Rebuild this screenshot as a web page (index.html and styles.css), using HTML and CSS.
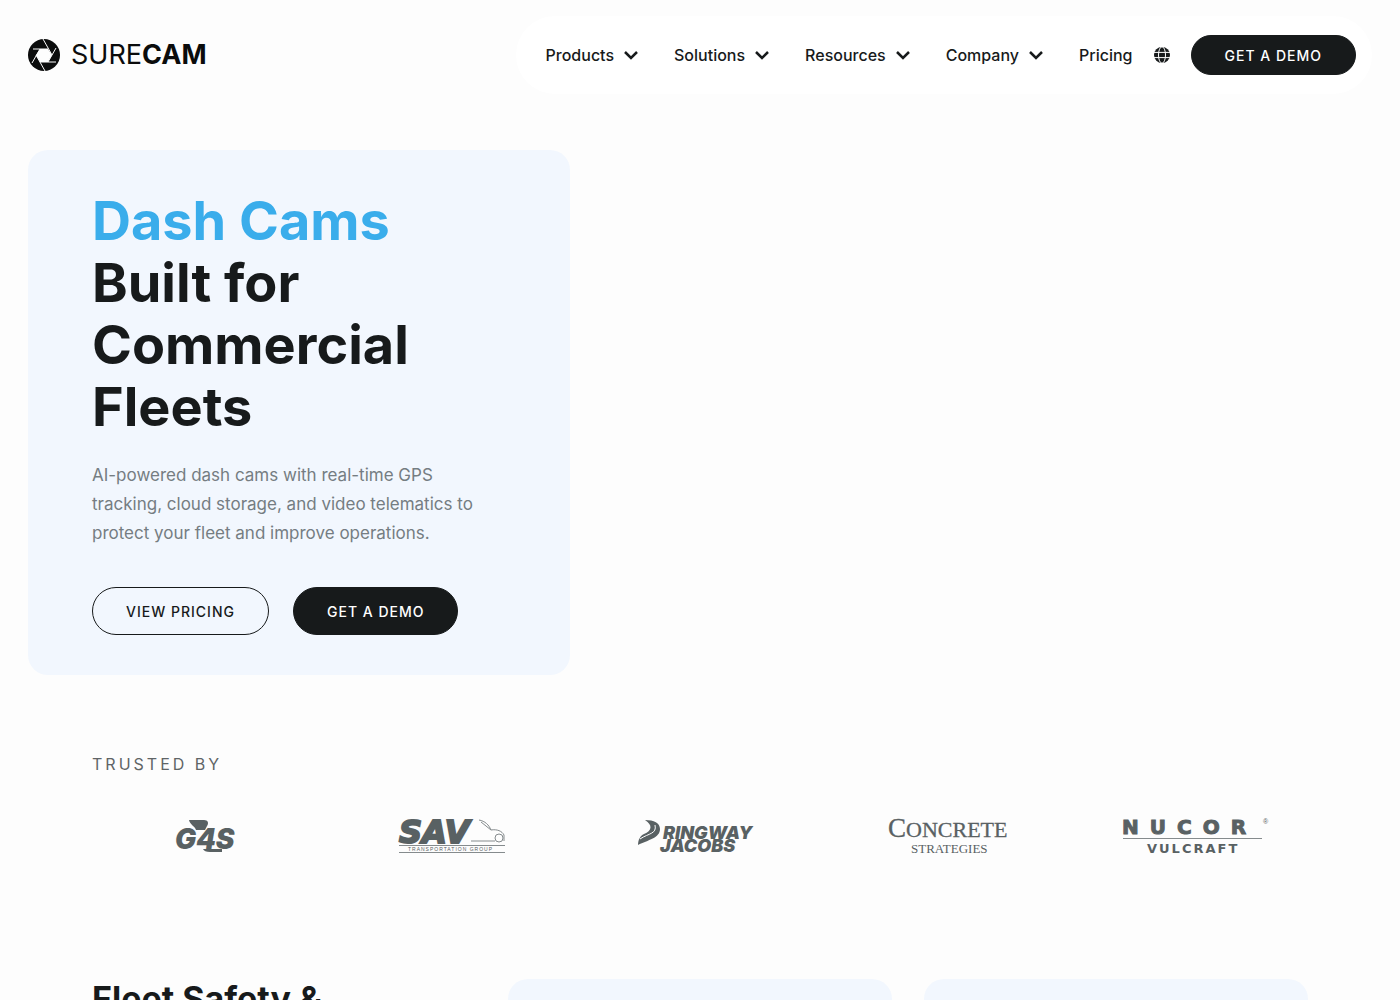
FILE: index.html
```html
<!DOCTYPE html>
<html lang="en">
<head>
  <meta charset="UTF-8">
  <meta name="viewport" content="width=device-width, initial-scale=1">
  <title>SureCam</title>
  <link rel="stylesheet" href="styles.css">
</head>
<body>

<header class="header">
  <a class="logo" href="#" aria-label="SureCam">
    <svg class="logo-mark" viewBox="0 0 32 32" aria-hidden="true">
      <circle cx="16" cy="16" r="16" fill="#0b0c0c"/>
      <path d="M12 10h8l4 6-4 7h-8l-4-7z" fill="#fdfdfd"/>
      <path d="M20 10H5M24 16L15 0M20 23l8-14M12 23h16M8 16l9 16M12 10L4 24" stroke="#fdfdfd" stroke-width="1" fill="none"/>
    </svg>
    <span class="logo-text">SURE<b>CAM</b></span>
  </a>

  <nav class="nav">
    <button class="nav-item" type="button">Products
      <svg class="chevron" viewBox="0 0 14 9" aria-hidden="true"><path d="M1 1l6 6 6-6"/></svg>
    </button>
    <button class="nav-item" type="button">Solutions
      <svg class="chevron" viewBox="0 0 14 9" aria-hidden="true"><path d="M1 1l6 6 6-6"/></svg>
    </button>
    <button class="nav-item" type="button">Resources
      <svg class="chevron" viewBox="0 0 14 9" aria-hidden="true"><path d="M1 1l6 6 6-6"/></svg>
    </button>
    <button class="nav-item" type="button">Company
      <svg class="chevron" viewBox="0 0 14 9" aria-hidden="true"><path d="M1 1l6 6 6-6"/></svg>
    </button>
    <div class="nav-end">
      <a class="nav-item" href="#">Pricing</a>
      <button class="globe" type="button" aria-label="Language">
        <svg viewBox="0 0 16 16" aria-hidden="true">
          <circle cx="8" cy="8" r="8" fill="#171a1b"/>
          <path d="M0 5.4h16M0 10.6h16" stroke="#fff" stroke-width="1"/>
          <ellipse cx="8" cy="8" rx="3.5" ry="8.2" fill="none" stroke="#fff" stroke-width="1"/>
        </svg>
      </button>
      <a class="btn btn-dark btn-small" href="#">GET A DEMO</a>
    </div>
  </nav>
</header>

<main>
  <section class="hero">
    <div class="hero-card">
      <h1><span class="accent">Dash Cams</span><br>Built for<br>Commercial<br>Fleets</h1>
      <p>AI-powered dash cams with real-time GPS tracking, cloud storage, and video telematics to protect your fleet and improve operations.</p>
      <div class="hero-buttons">
        <a class="btn btn-outline" href="#">VIEW PRICING</a>
        <a class="btn btn-dark" href="#">GET A DEMO</a>
      </div>
    </div>
  </section>

  <section class="trusted">
    <h2>TRUSTED BY</h2>
    <div class="brands">
      <svg class="brand" width="58" height="34" viewBox="0 0 58 34" role="img" aria-label="G4S">
        <path d="M14 1h15c4 0 5 3 3 6l-2 4h-9c-1-4-6-5-7-10z"/>
        <path d="M28 30h19v3H35c-4 0-6-1-7-3z"/>
        <text x="0" y="30" class="g4s">G4S</text>
      </svg>

      <svg class="brand" width="106" height="34" viewBox="0 0 106 34" role="img" aria-label="SAV Transportation Group">
        <text x="0" y="24" class="sav">SAV</text>
        <path d="M80 1c6 1 10 5 12 10M72 22h24M82 3l10 8M92 11c6-1 11 1 13 5v6" class="thin"/>
        <circle cx="100" cy="19" r="4" class="thin"/>
        <path d="M0 26.5h106M0 33.5h106" class="thin"/>
        <text x="9" y="32" class="sav-sub">TRANSPORTATION GROUP</text>
      </svg>

      <svg class="brand" width="126" height="34" viewBox="0 0 126 34" role="img" aria-label="Ringway Jacobs">
        <path d="M8 1c9 0 15 3 15 9 0 9-12 11-22 16 0-5 2-9 6-11 8-3 9-9 1-14z"/>
        <path d="M3 20c9-6 17-5 15-14" fill="none" stroke="#fdfdfd" stroke-width="1"/>
        <text x="26" y="20" class="ringway">RINGWAY</text>
        <text x="23" y="33" class="ringway">JACOBS</text>
      </svg>

      <svg class="brand" width="120" height="36" viewBox="0 0 120 36" role="img" aria-label="Concrete Strategies">
        <text x="0" y="19" class="concrete"><tspan class="concrete-cap">C</tspan>ONCRETE</text>
        <text x="23" y="35" class="strategies">STRATEGIES</text>
      </svg>

      <svg class="brand" width="148" height="36" viewBox="0 0 148 36" role="img" aria-label="Nucor Vulcraft">
        <text x="0" y="16" class="nucor">NUCOR</text>
        <text x="141" y="6" class="reg">®</text>
        <path d="M1 20.5h139" class="thin"/>
        <text x="25" y="35" class="vulcraft">VULCRAFT</text>
      </svg>
    </div>
  </section>

  <section class="safety">
    <h2>Fleet Safety &amp;</h2>
    <div class="safety-card"></div>
    <div class="safety-card"></div>
  </section>
</main>

</body>
</html>
```

FILE: styles.css
```css
* {
  box-sizing: border-box;
}
body {
  margin: 0;
  font-family: Inter, "Liberation Sans", sans-serif;
  color: #171a1b;
  background-color: #fdfdfd;
}
h1, h2, p {
  margin: 0;
}
a {
  color: inherit;
  text-decoration: none;
}
button {
  font: inherit;
  color: inherit;
  background: none;
  border: none;
  padding: 0;
  cursor: pointer;
}

/* Header */
.header {
  display: flex;
  justify-content: space-between;
  align-items: center;
  padding: 16px 28px;
}
.logo {
  display: flex;
  align-items: center;
  gap: 11px;
  color: #0b0c0c;
}
.logo-mark {
  width: 32px;
  height: 32px;
}
.logo-text {
  font-size: 27px;
  line-height: 32px;
}
.nav {
  display: flex;
  align-items: center;
  gap: 36px;
  padding: 19px 16px 19px 30px;
  border-radius: 40px;
  background-color: white;
}
.nav-item {
  display: flex;
  align-items: center;
  gap: 10px;
  font-size: 16px;
  line-height: 24px;
  font-weight: 500;
}
.chevron {
  width: 14px;
  height: 9px;
  fill: none;
  stroke: #171a1b;
  stroke-width: 2.5;
}
.nav-end {
  display: flex;
  align-items: center;
  gap: 21px;
}
.globe {
  width: 16px;
  height: 16px;
}
.globe svg {
  display: block;
}

/* Buttons */
.btn {
  display: flex;
  align-items: center;
  height: 48px;
  padding: 0 33px;
  border: 1px solid #171a1b;
  border-radius: 24px;
  font-size: 14px;
  font-weight: 500;
  letter-spacing: 1px;
}
.btn-small {
  height: 40px;
}
.btn-dark {
  color: white;
  background-color: #171a1b;
}

/* Hero */
.hero {
  padding: 40px 28px 0;
}
.hero-card {
  max-width: 542px;
  padding: 40px 64px;
  border-radius: 20px;
  background-color: #f2f7fe;
}
.hero-card h1 {
  font-size: 54px;
  line-height: 62px;
  font-weight: 700;
}
.accent {
  color: #3aadeb;
}
.hero-card p {
  margin: 23px 0 39px;
  font-size: 17px;
  line-height: 29px;
  font-weight: 400;
  color: #757d82;
}
.hero-buttons {
  display: flex;
  gap: 24px;
}

/* Trusted by */
.trusted {
  padding: 77px 92px 0;
}
.trusted h2 {
  font-size: 16px;
  line-height: 24px;
  font-weight: 400;
  letter-spacing: 3px;
  color: #5f6466;
}
.brands {
  display: grid;
  grid-template-columns: repeat(5, 1fr);
  gap: 24px;
  align-items: center;
  justify-items: center;
  margin-top: 42px;
}
.brand {
  fill: #596163;
  overflow: visible;
}
.thin {
  fill: none;
  stroke: #858b8d;
  stroke-width: 1;
}
.g4s {
  font: italic 900 28px Inter, sans-serif;
}
.sav {
  font: italic 700 32px "DejaVu Sans", sans-serif;
  stroke: #596163;
  stroke-width: 2;
}
.sav-sub {
  font: 5px "Liberation Sans", sans-serif;
  letter-spacing: 1px;
}
.ringway {
  font: italic 900 18px Inter, sans-serif;
}
.concrete {
  font: 22px "Liberation Serif", serif;
  stroke: #596163;
  stroke-width: 0.3;
}
.concrete-cap {
  font-size: 27px;
}
.strategies {
  font: 13px "Liberation Serif", serif;
}
.nucor {
  font: 700 20px "DejaVu Sans", sans-serif;
  letter-spacing: 11px;
  stroke: #596163;
  stroke-width: 1;
}
.reg {
  font: 7px "Liberation Sans", sans-serif;
}
.vulcraft {
  font: 700 13px "DejaVu Sans", sans-serif;
  letter-spacing: 2px;
}

/* Fleet safety */
.safety {
  display: grid;
  grid-template-columns: repeat(3, 1fr);
  gap: 32px;
  padding: 125px 92px 64px;
}
.safety h2 {
  font-size: 34px;
  line-height: 40px;
  font-weight: 700;
}
.safety-card {
  min-height: 360px;
  border-radius: 20px;
  background-color: #f2f7fe;
}
```
